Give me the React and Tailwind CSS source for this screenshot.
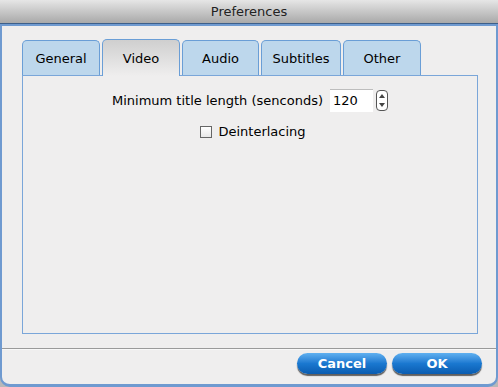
import React, { useState } from 'react';

const tabs = [
  { label: 'General', w: 'w-[78px]' },
  { label: 'Video', w: 'w-[78px]' },
  { label: 'Audio', w: 'w-[77px]' },
  { label: 'Subtitles', w: 'w-[80px]' },
  { label: 'Other', w: 'w-[78px]' },
];

export default function App() {
  const [active, setActive] = useState('Video');
  const [deinterlace, setDeinterlace] = useState(false);

  return (
    <div className="w-[498px] h-[387px] bg-[#b8b8b8] font-['DejaVu_Sans',sans-serif] text-[13px] text-black flex flex-col overflow-hidden">
      {/* Title bar */}
      <div className="h-[23px] shrink-0 bg-gradient-to-b from-[#e6e6e6] to-[#a9a9a9] flex items-center justify-center text-[#222]">
        Preferences
      </div>
      <div className="h-[1px] bg-[#3d5f8a] shrink-0" />

      {/* Window body */}
      <div className="flex-1 flex flex-col bg-[#efeeee] border-t-2 border-x-2 border-b-[3px] border-[#6f9ad0] rounded-b-[10px]">
        <div className="flex flex-col pl-[20px] pr-[18px] pt-[13px]">
          {/* Tabs */}
          <div className="flex items-end gap-[2px] h-[36px] relative z-10">
            {tabs.map(t => {
              const sel = t.label === active;
              return (
                <button
                  key={t.label}
                  onClick={() => setActive(t.label)}
                  className={`${t.w} border border-b-0 border-[#6a9ed6] rounded-t-[5px] flex items-center justify-center pt-[1px] ${
                    sel
                      ? 'h-[37px] bg-gradient-to-b from-[#cfcfcf] to-[#efeeee] -mb-px'
                      : 'h-[35px] bg-[#bdd7ec]'
                  }`}
                >
                  {t.label}
                </button>
              );
            })}
          </div>

          {/* Panel */}
          <div className="h-[259px] border border-[#7aa6d9] flex flex-col items-center pt-[13px]">
            <div className="flex items-center">
              <span>Minimum title length (senconds)</span>
              <div className="ml-[7px] w-[43px] h-[23px] bg-white border-t border-[#bdbdbd] flex items-center pl-[3px]">120</div>
              <div className="ml-[3px] w-[12px] h-[21px] border border-[#555] rounded-[4px] bg-white flex flex-col items-center justify-center gap-[5px]">
                <svg width="6" height="4" viewBox="0 0 6 4"><path d="M3 0L6 4H0Z" fill="#444" /></svg>
                <svg width="6" height="4" viewBox="0 0 6 4"><path d="M0 0H6L3 4Z" fill="#444" /></svg>
              </div>
            </div>
            <label className="flex items-center mt-[10px] ml-[6px] cursor-pointer">
              <span
                onClick={() => setDeinterlace(!deinterlace)}
                className="w-[12px] h-[12px] border border-[#666] bg-gradient-to-b from-white to-[#e8e8e8] flex items-center justify-center text-[10px] leading-none"
              >
                {deinterlace ? '✓' : ''}
              </span>
              <span className="ml-[6px]">Deinterlacing</span>
            </label>
          </div>
        </div>

        {/* Separator */}
        <div className="h-[2px] bg-[#9a9a9a] border-b border-[#f8f8f8] mt-[14px]" />

        {/* Buttons */}
        <div className="flex justify-end gap-[5px] pr-[14px] mt-[3px]">
          <button className="w-[90px] h-[21px] rounded-full bg-gradient-to-b from-[#5fb0f0] via-[#1a78d0] to-[#0a5cb0] text-white font-bold text-[13px] shadow-[0_2px_1px_rgba(0,0,0,0.6)]">
            Cancel
          </button>
          <button className="w-[90px] h-[21px] rounded-full bg-gradient-to-b from-[#5fb0f0] via-[#1a78d0] to-[#0a5cb0] text-white font-bold text-[13px] shadow-[0_2px_1px_rgba(0,0,0,0.6)]">
            OK
          </button>
        </div>
      </div>
    </div>
  );
}
